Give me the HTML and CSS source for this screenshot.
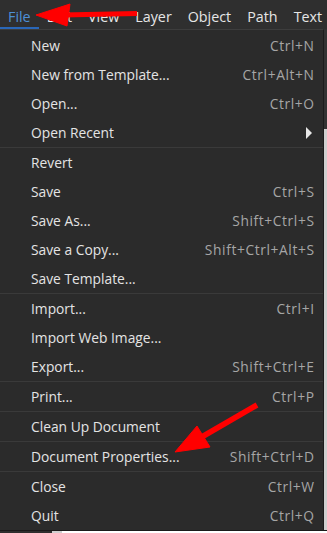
FILE: index.html
```html
<!DOCTYPE html>
<html>
<head>
<meta charset="utf-8">
<link rel="stylesheet" href="styles.css">
</head>
<body>
<div class="app">
  <nav class="menubar">
    <span class="mb-item active">File</span>
    <span class="mb-item">Edit</span>
    <span class="mb-item">View</span>
    <span class="mb-item">Layer</span>
    <span class="mb-item">Object</span>
    <span class="mb-item">Path</span>
    <span class="mb-item">Text</span>
  </nav>
  <div class="workspace">
    <div class="menu">
      <div class="mi"><span>New</span><span class="sc">Ctrl+N</span></div>
      <div class="mi"><span>New from Template...</span><span class="sc">Ctrl+Alt+N</span></div>
      <div class="mi"><span>Open...</span><span class="sc">Ctrl+O</span></div>
      <div class="mi"><span>Open Recent</span><span class="sub"></span></div>
      <div class="sep"></div>
      <div class="mi"><span>Revert</span></div>
      <div class="mi"><span>Save</span><span class="sc">Ctrl+S</span></div>
      <div class="mi"><span>Save As...</span><span class="sc">Shift+Ctrl+S</span></div>
      <div class="mi"><span>Save a Copy...</span><span class="sc">Shift+Ctrl+Alt+S</span></div>
      <div class="mi"><span>Save Template...</span></div>
      <div class="sep"></div>
      <div class="mi"><span>Import...</span><span class="sc">Ctrl+I</span></div>
      <div class="mi"><span>Import Web Image...</span></div>
      <div class="mi"><span>Export...</span><span class="sc">Shift+Ctrl+E</span></div>
      <div class="sep"></div>
      <div class="mi"><span>Print...</span><span class="sc">Ctrl+P</span></div>
      <div class="sep"></div>
      <div class="mi"><span>Clean Up Document</span></div>
      <div class="sep"></div>
      <div class="mi"><span>Document Properties...</span><span class="sc">Shift+Ctrl+D</span></div>
      <div class="sep"></div>
      <div class="mi"><span>Close</span><span class="sc">Ctrl+W</span></div>
      <div class="mi"><span>Quit</span><span class="sc">Ctrl+Q</span></div>
    </div>
    <div class="scroll"></div>
  </div>
  <div class="canvas-edge">
    <div class="ruler"></div>
    <div class="tick"></div>
    <div class="paper"></div>
  </div>
  <svg class="annot" width="327" height="533" viewBox="0 0 327 533">
    <g fill="#ff0000" stroke="#ff0000" stroke-linejoin="round">
      <line x1="137" y1="13.5" x2="62" y2="15" stroke-width="5"/>
      <polygon points="36,15 70,4 67,26" stroke-width="1"/>
      <line x1="257" y1="405" x2="200" y2="438" stroke-width="5.5"/>
      <polygon points="175,452 197,426 210,447" stroke-width="1"/>
    </g>
  </svg>
</div>
</body>
</html>
```
FILE: styles.css
```css
html, body {
  margin: 0;
  padding: 0;
  background: #2b2b2b;
}
.app {
  position: relative;
  width: 327px;
  height: 533px;
  overflow: hidden;
  font-family: "Open Sans", "Noto Sans", sans-serif;
  color: #e4e4e4;
}
.menubar {
  display: flex;
  height: 29px;
  background: #2f2f2f;
  font-size: 14.3px;
}
.mb-item {
  padding: 3px 8px 0;
  height: 29px;
  line-height: 28px;
  box-sizing: border-box;
  color: #e6e6e6;
  white-space: nowrap;
}
.mb-item.active {
  color: #4d8fd6;
  border-bottom: 2px solid #2a67b8;
}
.workspace {
  display: flex;
  height: 501px;
}
.menu {
  width: 324px;
  flex: none;
  box-sizing: border-box;
  background: #2b2b2b;
  border-top: 1px solid #3d3d3d;
  border-right: 1px solid #1c1c1c;
  padding-top: 1px;
  font-size: 13.8px;
}
.mi {
  display: flex;
  justify-content: space-between;
  align-items: center;
  height: 29px;
  padding: 0 9px 0 31px;
  white-space: nowrap;
}
.sc {
  color: #a6a6a6;
  letter-spacing: 0.6px;
  margin-right: -0.6px;
}
.sub {
  width: 0;
  height: 0;
  border-left: 6px solid #e8e8e8;
  border-top: 6px solid transparent;
  border-bottom: 6px solid transparent;
  margin-right: 2px;
}
.sep {
  height: 1px;
  background: #3a3a3a;
}
.scroll {
  flex: 1;
  background: #d0d0d0;
  border-top: 100px solid #333333;
}
.canvas-edge {
  display: flex;
  height: 3px;
  border-top: 1px solid #1a1a1a;
}
.ruler {
  width: 52px;
  background: #2e2e2e;
}
.tick {
  width: 10px;
  background: #cfcfcf;
}
.paper {
  flex: 1;
  background: #ffffff;
}
.annot {
  position: absolute;
  left: 0;
  top: 0;
}
```
